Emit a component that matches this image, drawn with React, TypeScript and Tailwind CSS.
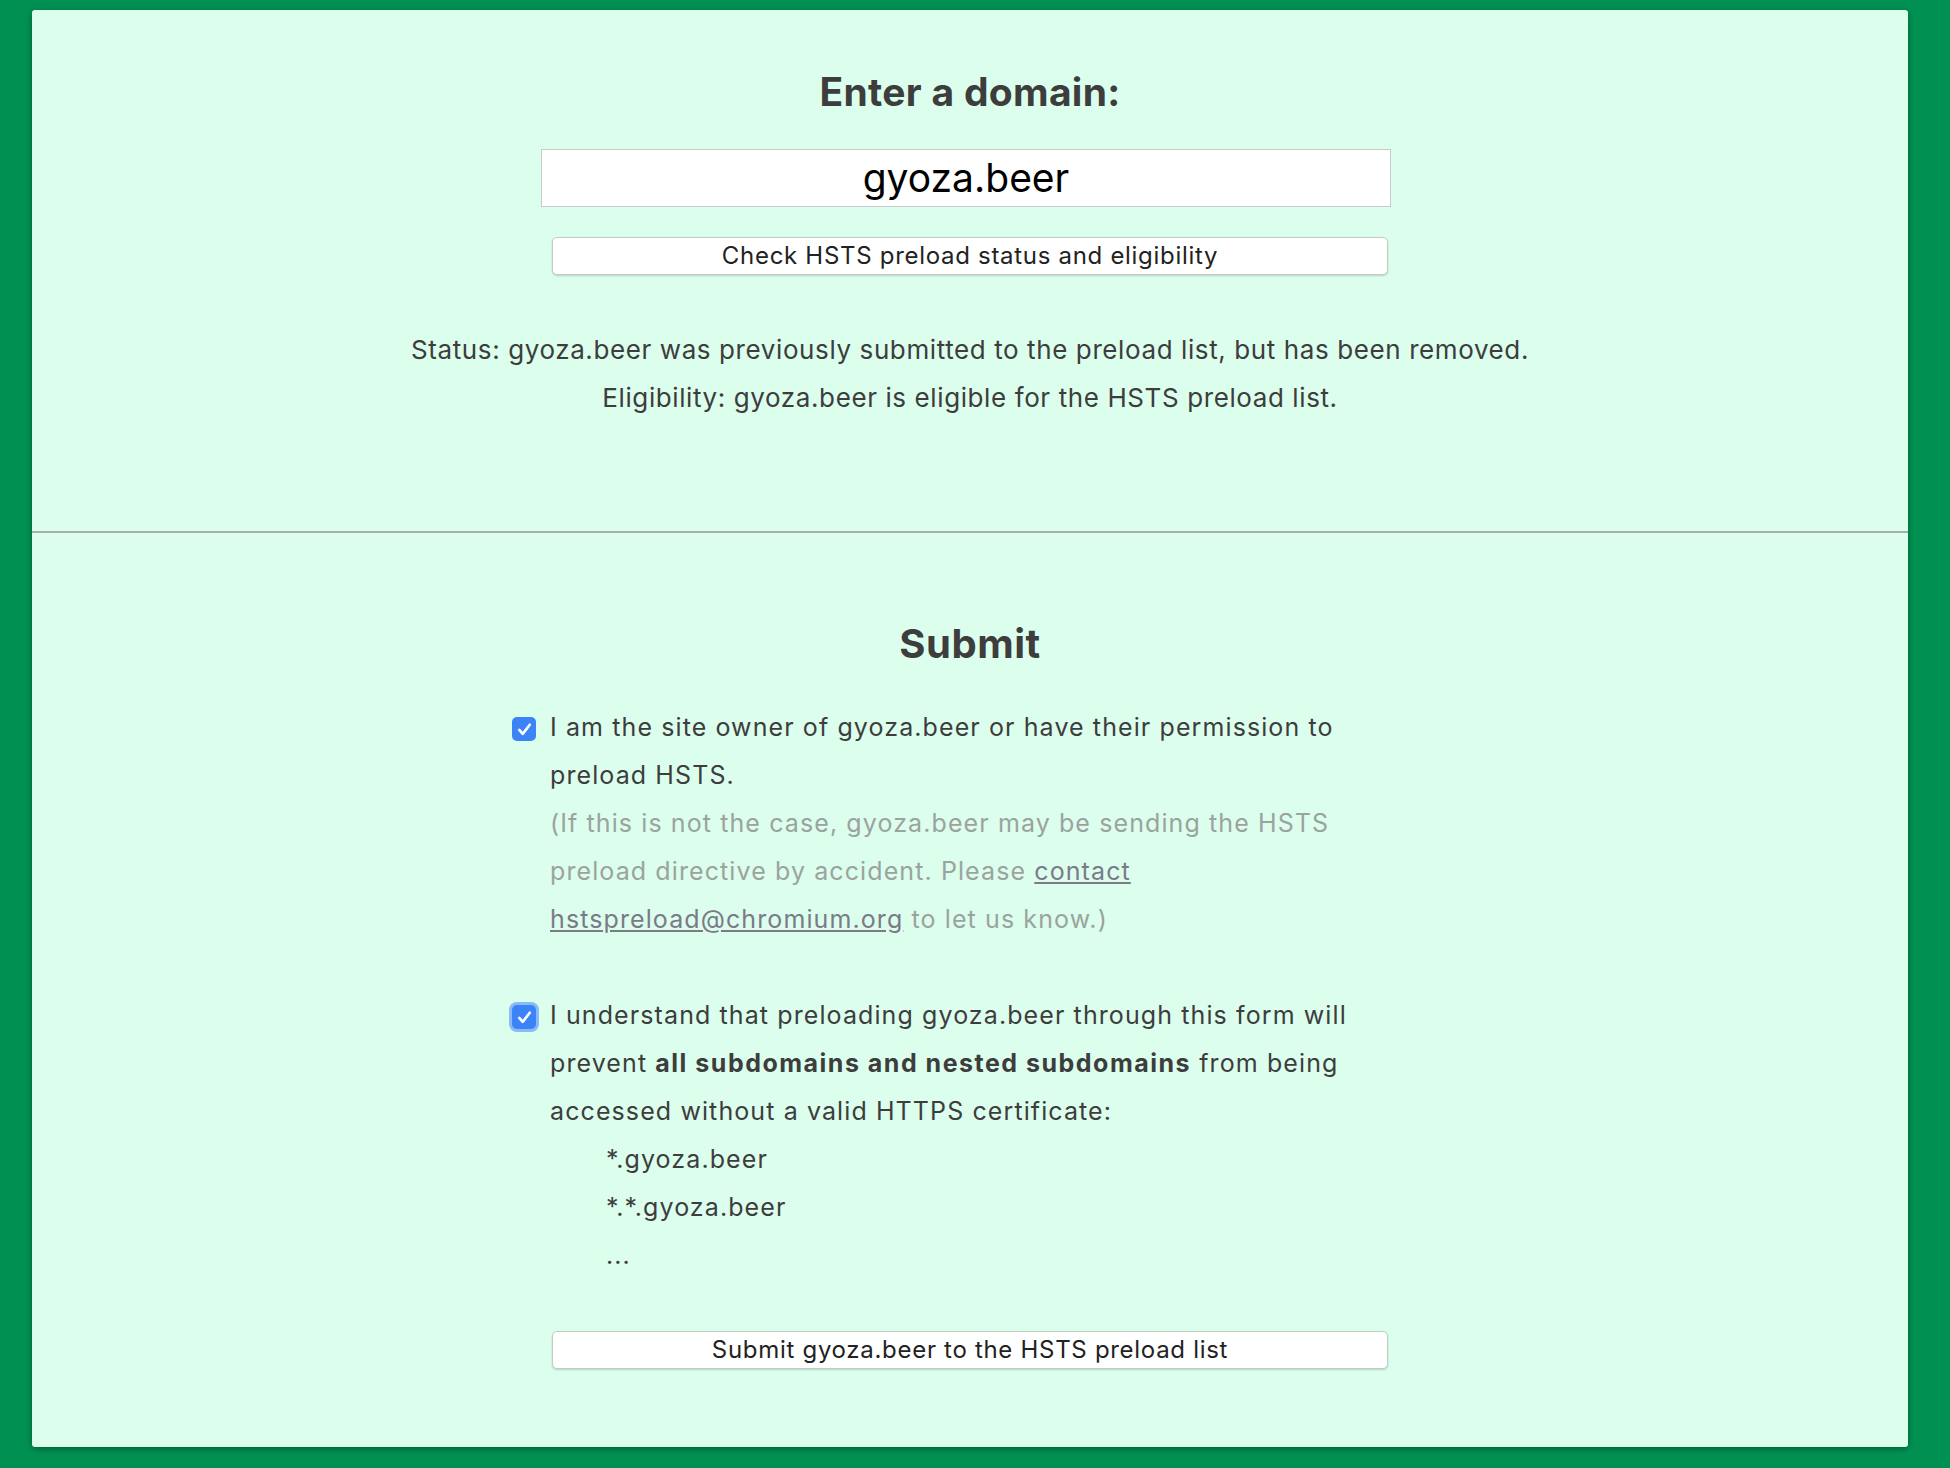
import React from 'react';

function Checkbox({ focused }: { focused?: boolean }) {
  return (
    <span
      className={`mt-[14px] flex h-[24px] w-[24px] shrink-0 items-center justify-center rounded-[5px] bg-[#3a84f7] ${
        focused ? 'ring-[3px] ring-[#8cb9f8]' : ''
      }`}
    >
      <svg viewBox="0 0 24 24" className="h-[21px] w-[21px]" fill="none" stroke="white" strokeWidth={3} strokeLinecap="round" strokeLinejoin="round">
        <path d="M6 12.5l4 4.5L18 6.5" />
      </svg>
    </span>
  );
}

function PlainButton({ children, className = '' }: { children: React.ReactNode; className?: string }) {
  return (
    <button
      type="button"
      className={`h-[38px] w-[836px] rounded-[5px] border border-[#c4ccc8] bg-white text-[24px] leading-none tracking-[0.7px] text-[#222] shadow-[0_1px_2px_rgba(0,0,0,0.18)] ${className}`}
    >
      {children}
    </button>
  );
}

export default function App() {
  return (
    <div className="min-h-screen bg-[#009152] pt-[10px] pb-[20px] font-['Inter',sans-serif] text-[#3d3d3d]">
      <div className="ml-[32px] w-[1876px] rounded-[3px] bg-[#dcfeed] shadow-[0_2px_6px_rgba(0,0,0,0.35)]">
        {/* Lookup */}
        <section className="flex flex-col items-center pt-[62px] pb-[109px]">
          <h1 className="text-[39px] font-bold leading-none tracking-[0.3px]">Enter a domain:</h1>
          <input
            readOnly
            value="gyoza.beer"
            className="mt-[38px] mr-[8px] h-[58px] w-[850px] border border-[#c9cbca] bg-white text-center text-[39px] text-black outline-none"
          />
          <PlainButton className="mt-[30px]">Check HSTS preload status and eligibility</PlainButton>
          <div className="mt-[51px] text-center text-[26px] leading-[48px] tracking-[0.6px]">
            <p>Status: gyoza.beer was previously submitted to the preload list, but has been removed.</p>
            <p>Eligibility: gyoza.beer is eligible for the HSTS preload list.</p>
          </div>
        </section>

        <div className="h-[2px] bg-[#a9acaa]" />

        {/* Submit */}
        <section className="flex flex-col items-center pt-[91px] pb-[78px]">
          <h2 className="text-[40px] font-bold leading-none tracking-[0.5px]">Submit</h2>

          <div className="mt-[39px] mr-[36px] w-[880px] text-[25px] leading-[48px] tracking-[1.1px]">
            <label className="flex gap-[14px]">
              <Checkbox />
              <div className="w-[842px]">
                I am the site owner of gyoza.beer or have their permission to preload HSTS.
                <div className="text-[#9ba39f]">
                  (If this is not the case, gyoza.beer may be sending the HSTS preload directive by accident. Please{' '}
                  <a className="text-[#7b7a88] underline">contact hstspreload@chromium.org</a> to let us know.)
                </div>
              </div>
            </label>

            <label className="mt-[48px] flex gap-[14px]">
              <Checkbox focused />
              <div className="w-[842px]">
                I understand that preloading gyoza.beer through this form will prevent{' '}
                <b className="font-bold tracking-[1.5px]">all subdomains and nested subdomains</b> from being accessed
                without a valid HTTPS certificate:
                <ul className="pl-[56px]">
                  <li>*.gyoza.beer</li>
                  <li>*.*.gyoza.beer</li>
                  <li>...</li>
                </ul>
              </div>
            </label>
          </div>

          <PlainButton className="mt-[52px]">Submit gyoza.beer to the HSTS preload list</PlainButton>
        </section>
      </div>
    </div>
  );
}
